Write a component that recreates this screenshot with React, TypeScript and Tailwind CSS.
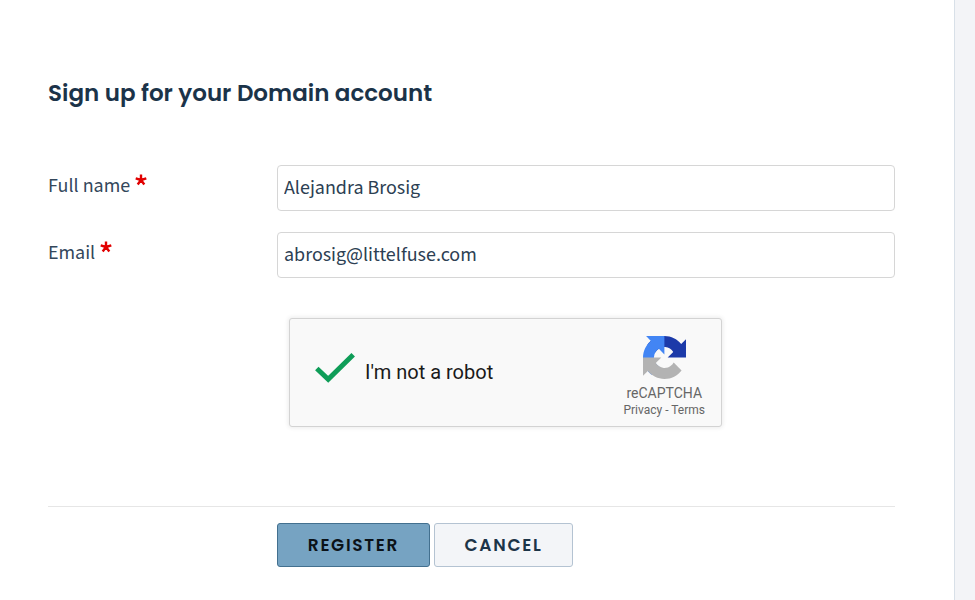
import React from "react";

const bodyFont = "font-['Source_Sans_3','Noto_Sans_CJK_JP',sans-serif]";
const headFont = "font-[Poppins,Inter,sans-serif]";

function Field({ id, label, type, value }: { id: string; label: string; type: string; value: string }) {
  return (
    <div className="flex items-start">
      <label htmlFor={id} className="flex w-[229px] shrink-0 pt-1.5 text-[20px] leading-[30px] text-[#33475b]">
        {label}
        <svg aria-hidden="true" viewBox="0 0 12 12" className="mt-[3px] ml-[5px] h-3 w-3" fill="none" stroke="#e10000" strokeWidth="2.4">
          <path d="M6 6V0.4M6 6L0.7 4.3M6 6L11.3 4.3M6 6L2.7 10.5M6 6L9.3 10.5" />
        </svg>
      </label>
      <input
        id={id}
        type={type}
        defaultValue={value}
        required
        className="h-[46px] min-w-0 flex-1 rounded-[4px] border border-[#d6d6d6] bg-white px-1.5 text-[20px] text-[#2c4053] outline-none"
      />
    </div>
  );
}

function RecaptchaLogo() {
  return (
    <svg aria-hidden="true" viewBox="0 0 64 64" className="h-[43px] w-[43px]">
      <path fill="#1c3aa9" d="M64 31.955l-.033-1.37V4.687l-7.16 7.16C50.948 4.674 42.033.093 32.05.093c-10.4 0-19.622 4.96-25.458 12.64l11.736 11.86a15.55 15.55 0 0 1 4.754-5.334c2.05-1.6 4.952-2.906 8.968-2.906.485 0 .86.057 1.135.163 4.976.393 9.288 3.14 11.828 7.124l-8.307 8.307L64 31.953" />
      <path fill="#4285f4" d="M31.862.094l-1.37.033H4.594l7.16 7.16C4.58 13.147 0 22.06 0 32.046c0 10.4 4.96 19.622 12.64 25.458L24.5 45.768a15.55 15.55 0 0 1-5.334-4.754c-1.6-2.05-2.906-4.952-2.906-8.968 0-.485.057-.86.163-1.135.393-4.976 3.14-9.288 7.124-11.828l8.307 8.307L31.86.095" />
      <path fill="#b3b3b3" d="M.001 32.045l.033 1.37v25.898l7.16-7.16c5.86 7.173 14.774 11.754 24.76 11.754 10.4 0 19.622-4.96 25.458-12.64l-11.736-11.86a15.55 15.55 0 0 1-4.754 5.334c-2.05 1.6-4.952 2.906-8.968 2.906-.485 0-.86-.057-1.135-.163-4.976-.393-9.288-3.14-11.828-7.124l8.307-8.307c-10.522.04-22.4.066-27.295-.005" />
    </svg>
  );
}

function Recaptcha() {
  return (
    <div className="mt-10 ml-[241px] flex h-[109px] max-w-[433px] justify-between rounded-[3px] border border-[#d3d3d3] bg-[#f9f9f9] pr-4 pl-[25px] font-[Roboto,sans-serif] shadow-[0_0_4px_1px_rgba(0,0,0,0.08)]">
      <label className="flex items-center pb-0.5 text-[20px] text-[#1a1a1a]">
        <input type="checkbox" defaultChecked className="peer sr-only" />
        <svg aria-hidden="true" viewBox="0 0 40 30" className="mr-2.5 mb-2 h-[30px] w-10 opacity-0 peer-checked:opacity-100" fill="none" stroke="#0f9d58" strokeWidth="5">
          <path d="M1.8 15.5L13.2 26.2L38.2 1.8" />
        </svg>
        I'm not a robot
      </label>
      <div className="flex flex-col items-center pt-[17px] text-[#666]">
        <RecaptchaLogo />
        <div className="mt-[5px] text-[14px] leading-[18px]">reCAPTCHA</div>
        <div className="text-[12px] leading-4">
          <a href="#privacy">Privacy</a>
          <span aria-hidden="true"> - </span>
          <a href="#terms">Terms</a>
        </div>
      </div>
    </div>
  );
}

export default function App() {
  return (
    <div className={`min-h-screen bg-[#f3f4f7] pr-5 ${bodyFont}`}>
      <main className="min-h-screen border-r border-[#d8e0e8] bg-white pt-[77px] pr-[59px] pl-12">
        <form onSubmit={(e) => e.preventDefault()}>
          <h1 className={`text-[23px] leading-8 font-semibold text-[#1b3349] ${headFont}`}>Sign up for your Domain account</h1>
          <div className="mt-14 flex flex-col gap-[21px]">
            <Field id="full-name" label="Full name" type="text" value="Alejandra Brosig" />
            <Field id="email" label="Email" type="email" value="abrosig@littelfuse.com" />
          </div>
          <Recaptcha />
          <div className={`mt-[79px] flex gap-1 border-t border-[#e6e6e6] pt-4 pl-[229px] text-[17px] font-semibold tracking-widest ${headFont}`}>
            <button type="submit" className="h-11 w-[153px] rounded-[3px] border border-[#43708f] bg-[#76a3c2] pt-0.5 text-[#0b1218]">REGISTER</button>
            <button type="button" className="h-11 w-[139px] rounded-[3px] border border-[#b4c3d2] bg-[#f3f5f8] pt-0.5 text-[#1c3448]">CANCEL</button>
          </div>
        </form>
      </main>
    </div>
  );
}
